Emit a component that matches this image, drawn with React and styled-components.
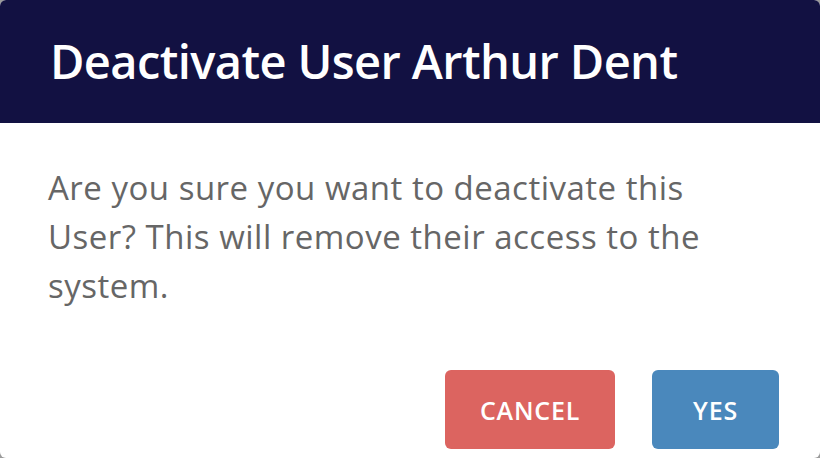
import React from "react";
import styled, { createGlobalStyle } from "styled-components";

const Global = createGlobalStyle`
  html, body { margin: 0; padding: 0; background: #9b9b9b; }
  body { font-family: "Open Sans", "Noto Sans", sans-serif; }
`;

const Dialog = styled.div`
  width: 820px;
  height: 458px;
  background: #ffffff;
  border-radius: 6px;
  overflow: hidden;
  display: flex;
  flex-direction: column;
  box-sizing: border-box;
`;

const Header = styled.header`
  height: 123px;
  flex: none;
  background: #121142;
  display: flex;
  align-items: center;
  padding: 0 50px;
  box-sizing: border-box;
`;

const Title = styled.h1`
  margin: 0;
  color: #ffffff;
  font-size: 47px;
  font-weight: 600;
  letter-spacing: -0.6px;
  line-height: 1.2;
  white-space: nowrap;
`;

const Body = styled.div`
  padding: 40px 48px 0;
`;

const Message = styled.p`
  margin: 0;
  width: 680px;
  color: #666666;
  font-size: 33px;
  line-height: 49px;
  letter-spacing: 0.5px;
`;

const Actions = styled.div`
  display: flex;
  justify-content: flex-end;
  gap: 37px;
  padding: 60px 41px 0 0;
`;

const Button = styled.button`
  height: 79px;
  width: ${(p) => p.$w}px;
  border: none;
  border-radius: 6px;
  background: ${(p) => p.$bg};
  color: #ffffff;
  font-family: "Open Sans", "Noto Sans", sans-serif;
  font-size: 25px;
  font-weight: 600;
  letter-spacing: 0.8px;
  text-transform: uppercase;
  cursor: pointer;
`;

export default function App() {
  return (
    <>
      <Global />
      <Dialog>
        <Header>
          <Title>Deactivate User Arthur Dent</Title>
        </Header>
        <Body>
          <Message>
            Are you sure you want to deactivate this User? This will remove their access to the system.
          </Message>
        </Body>
        <Actions>
          <Button $bg="#dc6460" $w={170}>Cancel</Button>
          <Button $bg="#4a88bc" $w={127}>Yes</Button>
        </Actions>
      </Dialog>
    </>
  );
}
